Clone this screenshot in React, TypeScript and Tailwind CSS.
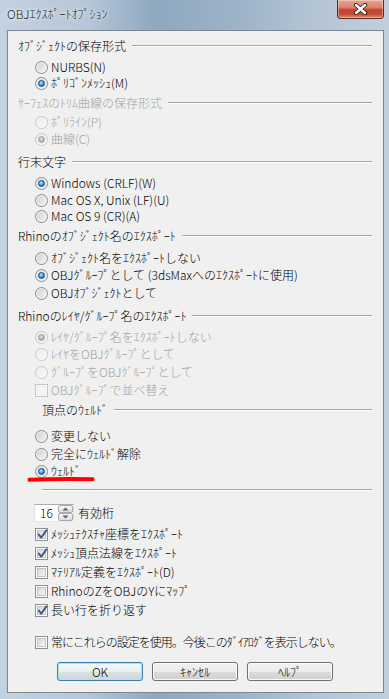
import React from "react";

const FONT = "font-['Noto_Sans_CJK_JP','Noto_Sans',sans-serif]";

function Radio({ checked = false, disabled = false }: { checked?: boolean; disabled?: boolean }) {
  return (
    <span
      className={`flex h-[13px] w-[13px] shrink-0 items-center justify-center rounded-full border ${
        disabled
          ? "border-[#c9c9c9] bg-[linear-gradient(135deg,#ececec,#fafafa)]"
          : "border-[#8a8b8b] bg-[linear-gradient(135deg,#cfcfcf,#f7f7f7)] shadow-[inset_0_0_0_1px_#f4f4f4]"
      }`}
    >
      {checked && (
        <span
          className={`h-[7px] w-[7px] rounded-full ${
            disabled
              ? "border border-[#9d9d9d] bg-[radial-gradient(circle_at_40%_35%,#e0e0e0_0%,#b4b4b4_60%,#9a9a9a_100%)]"
              : "border border-[#1a4d8a] bg-[radial-gradient(circle_at_40%_35%,#c4f0ff_0%,#3aa4ea_45%,#145296_100%)]"
          }`}
        />
      )}
    </span>
  );
}

function Check({ checked = false, disabled = false }: { checked?: boolean; disabled?: boolean }) {
  return (
    <span
      className={`relative flex h-[13px] w-[13px] shrink-0 items-center justify-center border ${
        disabled ? "border-[#c5c5c5] bg-[#fafafa]" : "border-[#8e8f8f] bg-white"
      }`}
    >
      <span
        className={`h-[9px] w-[9px] border ${
          disabled
            ? "border-[#ececec] bg-[#f6f6f6]"
            : "border-[#c2c2c2] bg-[linear-gradient(135deg,#d7d7d7,#f6f6f6)]"
        }`}
      />
      {checked && (
        <svg className="absolute left-[1px] top-[0px]" width="11" height="11" viewBox="0 0 11 11">
          <path d="M1.8 5.6 L4.2 8.6 L9.4 1.4" fill="none" stroke="#3d5591" strokeWidth="1.9" strokeLinecap="round" strokeLinejoin="round" />
        </svg>
      )}
    </span>
  );
}

function Header({ label, mt, disabled = false, indent = "" }: { label: string; mt: string; disabled?: boolean; indent?: string }) {
  return (
    <div className={`flex h-[16px] items-center ${mt} ${indent}`}>
      <span className={`whitespace-nowrap leading-none ${disabled ? "text-[#a0a0a0]" : "text-black"}`}>{label}</span>
      <span className="ml-[6px] h-[2px] flex-1 border-t border-b border-t-[#a5a5a5] border-b-white" />
    </div>
  );
}

function RadioRow({ label, mt, checked = false, disabled = false }: { label: string; mt: string; checked?: boolean; disabled?: boolean }) {
  return (
    <div className={`ml-[17px] flex h-[16px] items-center ${mt}`}>
      <Radio checked={checked} disabled={disabled} />
      <span className={`ml-[3px] whitespace-nowrap leading-none ${disabled ? "text-[#a0a0a0]" : "text-black"}`}>{label}</span>
    </div>
  );
}

function CheckRow({
  label,
  mt,
  checked = false,
  disabled = false,
  labelClass = "",
}: {
  label: string;
  mt: string;
  checked?: boolean;
  disabled?: boolean;
  labelClass?: string;
}) {
  return (
    <div className={`ml-[17px] flex h-[16px] items-center ${mt}`}>
      <Check checked={checked} disabled={disabled} />
      <span className={`ml-[3px] whitespace-nowrap leading-none ${disabled ? "text-[#a0a0a0]" : "text-black"} ${labelClass}`}>{label}</span>
    </div>
  );
}

function SpinHalf({ up }: { up?: boolean }) {
  return (
    <div className="flex flex-1 items-center justify-center rounded-[2px] border border-[#a9a9a9] bg-[linear-gradient(180deg,#f6f6f6,#dcdcdc)]">
      <svg width="7" height="4" viewBox="0 0 7 4">
        {up ? <path d="M0.5 3.5 L3.5 0.5 L6.5 3.5 Z" fill="#4d6185" /> : <path d="M0.5 0.5 L3.5 3.5 L6.5 0.5 Z" fill="#4d6185" />}
      </svg>
    </div>
  );
}

function Btn({ label, def = false }: { label: string; def?: boolean }) {
  return (
    <div
      className={`flex h-[19px] w-[86px] items-center justify-center rounded-[3px] border leading-none text-black ${
        def
          ? "border-[#3c7fb1] bg-[linear-gradient(180deg,#f4f9fb_0%,#eceff1_50%,#dde2e5_50%,#d0d6da_100%)] shadow-[inset_0_0_0_1px_#a8e3f8]"
          : "border-[#707070] bg-[linear-gradient(180deg,#f2f2f2_0%,#ebebeb_50%,#dddddd_50%,#cfcfcf_100%)] shadow-[inset_0_0_0_1px_#fbfbfb]"
      }`}
    >
      {label}
    </div>
  );
}

export default function App() {
  return (
    <div
      className={`${FONT} flex h-[699px] w-[389px] flex-col overflow-hidden text-[12px] font-light bg-[linear-gradient(90deg,#c3d2e0_0%,#b6c7d8_22%,#8fa8c0_40%,#9cb2c7_60%,#b3c4d5_80%,#c1cfdc_100%)]`}
    >
      {/* title bar */}
      <div className="flex h-[30px] shrink-0 items-start">
        <span className="ml-[7px] mt-[8px] whitespace-nowrap leading-none text-[#1b1b1b] [text-shadow:0_0_6px_#ffffff,0_0_3px_#ffffff]">
          OBJｴｸｽﾎﾟｰﾄｵﾌﾟｼｮﾝ
        </span>
        <div className="ml-auto mr-[5px] flex h-[19px] w-[47px] items-center justify-center rounded-b-[4px] border border-t-0 border-[#5b2a20] bg-[linear-gradient(180deg,#e7a595_0%,#d9806c_42%,#c3412a_55%,#c6503a_80%,#de8a70_100%)] shadow-[inset_0_0_0_1px_rgba(255,255,255,0.35)]">
          <svg width="15" height="12" viewBox="0 0 15 12">
            <path d="M3 2 L12 10 M12 2 L3 10" stroke="#3a1a14" strokeWidth="4.2" strokeLinecap="round" />
            <path d="M3 2 L12 10 M12 2 L3 10" stroke="#ffffff" strokeWidth="2.4" strokeLinecap="round" />
          </svg>
        </div>
      </div>

      {/* client area */}
      <div className="ml-[7px] mr-[5px] flex h-[663px] flex-col border border-[#7b8692] bg-[#f0f0f0] pl-[10px] pr-[11px]">
        <Header label="ｵﾌﾞｼﾞｪｸﾄの保存形式" mt="mt-[7px]" />
        <RadioRow label="NURBS(N)" mt="mt-[5px]" />
        <RadioRow label="ﾎﾟﾘｺﾞﾝﾒｯｼｭ(M)" mt="mt-[0px]" checked />
        <Header label="ｻｰﾌｪｽのﾄﾘﾑ曲線の保存形式" mt="mt-[4px]" disabled />
        <RadioRow label="ﾎﾟﾘﾗｲﾝ(P)" mt="mt-[3px]" disabled />
        <RadioRow label="曲線(C)" mt="mt-[1px]" checked disabled />
        <Header label="行末文字" mt="mt-[7px]" />
        <RadioRow label="Windows (CRLF)(W)" mt="mt-[5px]" checked />
        <RadioRow label="Mac OS X, Unix (LF)(U)" mt="mt-[1px]" />
        <RadioRow label="Mac OS 9 (CR)(A)" mt="mt-[0px]" />
        <Header label="Rhinoのｵﾌﾞｼﾞｪｸﾄ名のｴｸｽﾎﾟｰﾄ" mt="mt-[4px]" />
        <RadioRow label="ｵﾌﾞｼﾞｪｸﾄ名をｴｸｽﾎﾟｰﾄしない" mt="mt-[6px]" />
        <RadioRow label="OBJｸﾞﾙｰﾌﾟとして (3dsMaxへのｴｸｽﾎﾟｰﾄに使用)" mt="mt-[1px]" checked />
        <RadioRow label="OBJｵﾌﾞｼﾞｪｸﾄとして" mt="mt-[2px]" />
        <Header label="Rhinoのﾚｲﾔ/ｸﾞﾙｰﾌﾟ名のｴｸｽﾎﾟｰﾄ" mt="mt-[7px]" />
        <RadioRow label="ﾚｲﾔ/ｸﾞﾙｰﾌﾟ名をｴｸｽﾎﾟｰﾄしない" mt="mt-[5px]" checked disabled />
        <RadioRow label="ﾚｲﾔをOBJｸﾞﾙｰﾌﾟとして" mt="mt-[1px]" disabled />
        <RadioRow label="ｸﾞﾙｰﾌﾟをOBJｸﾞﾙｰﾌﾟとして" mt="mt-[2px]" disabled />
        <CheckRow label="OBJｸﾞﾙｰﾌﾟで並べ替え" mt="mt-[2px]" disabled />
        <Header label="頂点のｳｪﾙﾄﾞ" mt="mt-[4px]" indent="ml-[24px]" />
        <RadioRow label="変更しない" mt="mt-[10px]" />
        <RadioRow label="完全にｳｪﾙﾄﾞ解除" mt="mt-[2px]" />
        <div className="relative ml-[17px] mt-[1px] flex h-[16px] items-center">
          <Radio checked />
          <span className="ml-[3px] whitespace-nowrap leading-none text-black">ｳｪﾙﾄﾞ</span>
          <svg className="absolute left-[-8px] top-[13px]" width="68" height="7" viewBox="0 0 68 7">
            <path d="M2.5 3.8 Q30 2.6 65.5 3.2" fill="none" stroke="#ff0000" strokeWidth="4" strokeLinecap="round" />
          </svg>
        </div>

        <div className="ml-[24px] mt-[10px] h-[2px] border-t border-b border-t-[#a5a5a5] border-b-white" />

        <div className="ml-[16px] mt-[13px] flex h-[18px] items-center">
          <div className="flex h-[18px] w-[40px] items-stretch border border-[#abadb3] border-b-[#e3e9ef] border-l-[#e2e3ea] border-r-[#dbdfe6] bg-white">
            <span className="flex flex-1 items-center pl-[5px] leading-none">16</span>
            <div className="flex w-[15px] flex-col">
              <SpinHalf up />
              <SpinHalf />
            </div>
          </div>
          <span className="ml-[4px] whitespace-nowrap leading-none">有効桁</span>
        </div>

        <CheckRow label="ﾒｯｼｭﾃｸｽﾁｬ座標をｴｸｽﾎﾟｰﾄ" mt="mt-[4px]" checked />
        <CheckRow label="ﾒｯｼｭ頂点法線をｴｸｽﾎﾟｰﾄ" mt="mt-[3px]" checked />
        <CheckRow label="ﾏﾃﾘｱﾙ定義をｴｸｽﾎﾟｰﾄ(D)" mt="mt-[3px]" />
        <CheckRow label="RhinoのZをOBJのYにﾏｯﾌﾟ" mt="mt-[3px]" />
        <CheckRow label="長い行を折り返す" mt="mt-[3px]" checked />

        <CheckRow
          label="常にこれらの設定を使用。今後このﾀﾞｲｱﾛｸﾞを表示しない。"
          mt="mt-[16px]"
          labelClass="tracking-[-1px]"
        />

        <div className="mt-[12px] flex justify-center gap-[9px]">
          <Btn label="OK" def />
          <Btn label="ｷｬﾝｾﾙ" />
          <Btn label="ﾍﾙﾌﾟ" />
        </div>
      </div>
    </div>
  );
}
